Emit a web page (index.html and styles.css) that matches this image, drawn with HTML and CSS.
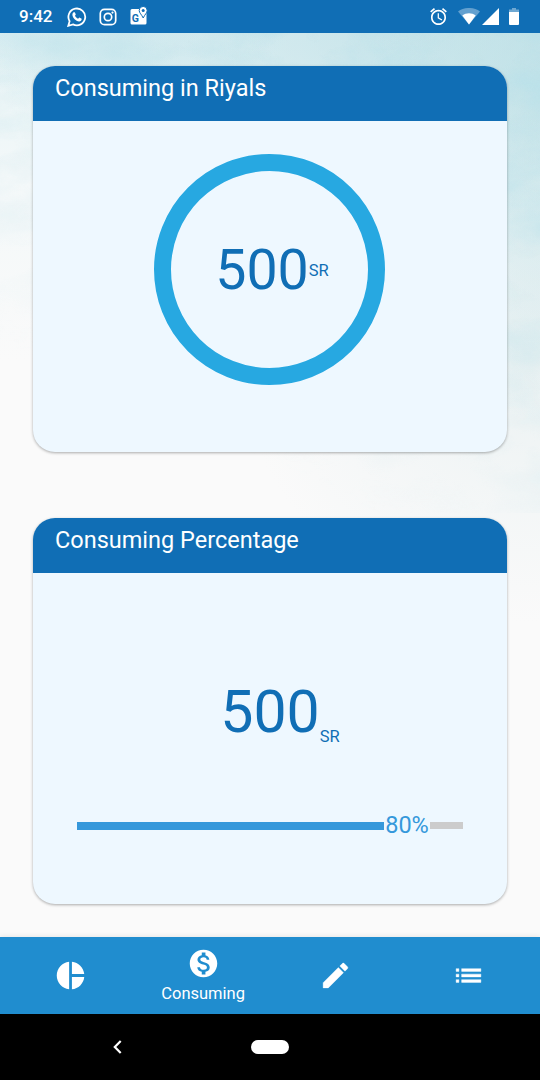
FILE: index.html
```html
<!DOCTYPE html>
<html lang="en">
<head>
<meta charset="utf-8">
<title>Consuming</title>
<link rel="stylesheet" href="styles.css">
</head>
<body>
<div class="screen">
  <header class="status">
    <span class="clock">9:42</span>
    <svg class="st-wa" viewBox="0 0 20 20"><path d="M2.600 14.200A8.400 8.400 0 1 1 6 17.400L1.300 18.800Z" fill="none" stroke="#fff" stroke-width="1.800"/><path d="M6.600 5.200h1.200l1 2.300-.8 1.300c.7 1.400 1.700 2.300 3.100 2.900l1.200-1.200 2.400 1.200c0 1.700-1.100 2.700-2.600 2.700-3.200-.4-6.400-3.600-6.700-6.500 0-1.200.5-2.200 1.200-2.700Z" fill="#fff"/></svg>
    <svg class="st-ig" viewBox="0 0 18 18"><rect x="1.300" y="1.300" width="15.400" height="15.400" rx="4.200" fill="none" stroke="#fff" stroke-width="1.700"/><circle cx="9" cy="9" r="3.700" fill="none" stroke="#fff" stroke-width="1.700"/><circle cx="13.500" cy="4.600" r="1.100" fill="#fff"/></svg>
    <svg class="st-map" viewBox="0 0 18 19"><path d="M2 3h13a1.500 1.500 0 0 1 1.500 1.500V17a1.500 1.500 0 0 1-1.500 1.500H2A1.500 1.500 0 0 1 .5 17V4.500A1.500 1.500 0 0 1 2 3Z" fill="#fff"/><path d="M13.200.4a4 4 0 0 0-4 4c0 2.600 2.400 4 4 7.600 1.600-3.600 4-5 4-7.600a4 4 0 0 0-4-4Z" fill="#fff" stroke="#106eb5" stroke-width="1"/><circle cx="13.200" cy="4.500" r="1.500" fill="#106eb5"/><text x="1.800" y="15.800" class="map-g">G</text></svg>
    <span class="spacer"></span>
    <svg class="st-alarm" viewBox="2 1.800 20 20.300" fill="#fff"><path d="M22 5.720l-4.600-3.860-1.290 1.530 4.600 3.860L22 5.720zM7.880 3.390L6.600 1.860 2 5.710l1.290 1.530 4.590-3.850zM12.500 8H11v6l4.750 2.850.75-1.230-4-2.370V8zM12 4c-4.970 0-9 4.030-9 9s4.020 9 9 9c4.970 0 9-4.030 9-9s-4.030-9-9-9zm0 16c-3.870 0-7-3.130-7-7s3.130-7 7-7 7 3.130 7 7-3.130 7-7 7z"/></svg>
    <svg class="st-wifi" viewBox="0 0 22 17" fill="#fff"><path d="M0 3.500C6-1.200 16-1.200 22 3.500L11 16.500Z" opacity=".35"/><path d="M4.300 7.500c4-3 9.400-3 13.400 0L11 16.500Z"/></svg>
    <svg class="st-cell" viewBox="0 0 17 17" fill="#fff"><path d="M17 0v17H0Z"/></svg>
    <svg class="st-batt" viewBox="0 0 10 17" fill="#fff"><path d="M3 0h4v1.500h3V4H0V1.500h3Z" opacity=".4"/><path d="M0 4h10v12a1 1 0 0 1-1 1H1a1 1 0 0 1-1-1Z"/></svg>
  </header>

  <main class="content">
    <svg class="wash" viewBox="0 0 540 904" preserveAspectRatio="none" aria-hidden="true">
      <defs>
        <filter id="paper" x="0" y="0" width="100%" height="100%">
          <feTurbulence type="fractalNoise" baseFrequency=".014 .024" numOctaves="5" seed="8"/>
          <feColorMatrix values="0 0 0 0 .48  0 0 0 0 .75  0 0 0 0 .82  1.800 0 0 0 -.68"/>
        </filter>
        <linearGradient id="fade" x1=".95" y1="0" x2=".5" y2=".9"><stop offset="0" stop-color="#fff"/><stop offset=".4" stop-color="#777"/><stop offset="1" stop-color="#000"/></linearGradient>
        <mask id="fadeMask"><rect width="540" height="480" fill="url(#fade)"/></mask>
      </defs>
      <g mask="url(#fadeMask)"><rect width="540" height="480" filter="url(#paper)"/></g>
    </svg>

    <section class="card">
      <h2 class="card-title">Consuming in Riyals</h2>
      <div class="card-body ring-body">
        <div class="ring"><span class="amount">500</span><span class="unit">SR</span></div>
      </div>
    </section>

    <section class="card">
      <h2 class="card-title">Consuming Percentage</h2>
      <div class="card-body percent-body">
        <div class="total"><span class="amount amount-lg">500</span><span class="unit">SR</span></div>
        <div class="progress"><span class="bar-done"></span><span class="percent">80%</span><span class="bar-rest"></span></div>
      </div>
    </section>
  </main>

  <nav class="tabs">
    <a class="tab"><svg class="icon" viewBox="0 0 24 24"><path d="M11 2v20c-5.070-.5-9-4.790-9-10s3.930-9.500 9-10zm2.030 0v8.990H22c-.47-4.740-4.240-8.520-8.970-8.990zm0 11.010V22c4.740-.47 8.500-4.250 8.970-8.990h-8.970z"/></svg></a>
    <a class="tab active"><svg class="icon" viewBox="0 0 24 24"><path d="M12 2C6.480 2 2 6.480 2 12s4.480 10 10 10 10-4.480 10-10S17.520 2 12 2zm1.410 16.090V20h-2.670v-1.930c-1.710-.36-3.160-1.460-3.270-3.400h1.960c.1 1.050.82 1.870 2.650 1.870 1.960 0 2.400-.98 2.400-1.590 0-.83-.44-1.610-2.670-2.140-2.480-.6-4.180-1.620-4.180-3.670 0-1.720 1.390-2.840 3.110-3.210V4h2.670v1.950c1.860.45 2.790 1.860 2.850 3.390H14.300c-.05-1.110-.64-1.870-2.220-1.870-1.500 0-2.400.68-2.400 1.640 0 .84.65 1.390 2.670 1.910s4.180 1.390 4.180 3.910c-.01 1.830-1.380 2.830-3.120 3.160z"/></svg><span class="tab-label">Consuming</span></a>
    <a class="tab"><svg class="icon" viewBox="0 0 24 24"><path d="M3 17.250V21h3.750L17.810 9.940l-3.750-3.750L3 17.250zM20.710 7.040c.39-.39.39-1.020 0-1.410l-2.340-2.340c-.39-.39-1.020-.39-1.410 0l-1.830 1.830 3.750 3.750 1.830-1.830z" stroke="#fff" stroke-width=".25" stroke-linejoin="round"/></svg></a>
    <a class="tab"><svg class="icon" viewBox="0 0 24 24"><path d="M3 13h2v-2H3v2zm0 4h2v-2H3v2zm0-8h2V7H3v2zm4 4h14v-2H7v2zm0 4h14v-2H7v2zM7 7v2h14V7H7z" stroke="#fff" stroke-width=".3"/></svg></a>
  </nav>

  <footer class="sysnav">
    <svg class="back" viewBox="0 0 8 14"><path d="M7.200 1L1.300 7l5.900 6" fill="none" stroke="#fff" stroke-width="2.200"/></svg>
    <span class="home"></span>
  </footer>
</div>
</body>
</html>
```
FILE: styles.css
```css
* { box-sizing: border-box; }
body { margin: 0; font-family: Roboto, "Noto Sans", sans-serif; }
svg { display: block; flex: none; }

.screen { width: 540px; height: 1080px; display: flex; flex-direction: column; overflow: hidden; }

.status { height: 33px; flex: none; display: flex; align-items: center; padding: 0 21px 0 19px; background: #106eb5; color: #fff; }
.clock { width: 48px; font-size: 17px; font-weight: 500; line-height: 33px; }
.st-wa { width: 20px; height: 20px; }
.st-ig { width: 18px; height: 18px; margin-left: 12px; }
.st-map { width: 18px; height: 19px; margin: -3px 0 0 13px; }
.map-g { font: 700 10.500px Roboto, sans-serif; fill: #106eb5; }
.spacer { flex: 1; }
.st-alarm { width: 17px; height: 17px; }
.st-wifi { width: 22px; height: 17px; margin-left: 11px; }
.st-cell { width: 17px; height: 17px; margin-left: 2px; }
.st-batt { width: 10px; height: 17px; margin-left: 10px; }

.content {
  position: relative; height: 904px; flex: none; padding: 33px 33px 0; display: flex; flex-direction: column; gap: 66px;
  background:
    radial-gradient(ellipse 200px 60px at 90px 0, rgba(190, 226, 234, .5), transparent),
    radial-gradient(ellipse 190px 330px at 560px 60px, rgba(178, 219, 226, .6), transparent),
    radial-gradient(ellipse 420px 200px at 400px 0, rgba(190, 224, 231, .75), transparent),
    radial-gradient(ellipse 300px 260px at 540px 330px, rgba(232, 240, 241, .8), transparent),
    linear-gradient(#e6f3f5 0, #f3f8f9 140px, #fafafa 330px, #fafafa 100%);
}
.wash { position: absolute; inset: 0; width: 540px; height: 904px; }

.card { position: relative; height: 386px; flex: none; border-radius: 22px; overflow: hidden; background: #eef8ff; box-shadow: 0 1px 3px rgba(0, 0, 0, .32); display: flex; flex-direction: column; }
.card-title { height: 55px; margin: 0; padding: 8px 22px 0; background: #106eb5; color: #fff; font-size: 23.500px; line-height: 28px; font-weight: 400; }
.card-body { flex: 1; display: flex; flex-direction: column; align-items: center; }
.ring-body { padding: 33px 1px 0 0; }
.ring { width: 231px; height: 231px; border: 17px solid #27a8e1; border-radius: 50%; display: flex; align-items: center; justify-content: center; padding: 2px 0 0 5px; }
.amount { color: #106eb5; font-size: 55.500px; line-height: 66px; }
.amount-lg { font-size: 59px; line-height: 70px; }
.unit { color: #106eb5; font-size: 16.500px; line-height: 20px; }
.percent-body { padding: 104px 44px 0; }
.total { display: flex; align-items: flex-end; padding-left: 20px; }
.progress { width: 386px; height: 30px; margin-top: 63px; display: flex; align-items: center; }
.bar-done { width: 307px; height: 8px; margin-top: 1px; background: #3598db; }
.percent { width: 46px; text-align: center; color: #3598db; font-size: 23.500px; line-height: 30px; }
.bar-rest { flex: 1; height: 7px; background: #ccc; }

.tabs { height: 77px; flex: none; display: flex; padding: 0 5px 0 4px; background: #208dcf; position: relative; box-shadow: 0 -1px 5px rgba(0, 0, 0, .08); }
.tab { flex: 1; display: flex; flex-direction: column; align-items: center; justify-content: center; color: #fff; }
.icon { width: 33px; height: 33px; fill: #fff; }
.tab-label { font-size: 16.500px; line-height: 20px; margin-top: 4px; }

.sysnav { height: 66px; flex: none; display: flex; align-items: center; background: #000; padding-left: 113px; }
.back { width: 9px; height: 14px; }
.home { width: 38px; height: 14px; margin-left: 129px; border-radius: 7px; background: #fff; }
```
